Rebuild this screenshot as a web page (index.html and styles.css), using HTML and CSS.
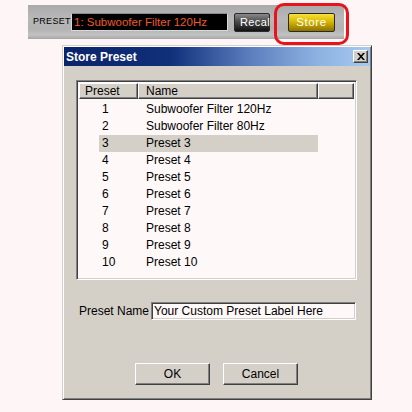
FILE: index.html
```html
<!DOCTYPE html>
<html lang="en">

<head>
    <meta charset="UTF-8">
    <meta name="viewport" content="width=device-width, initial-scale=1.0">
    <title>Store Preset</title>
    <link rel="stylesheet" href="styles.css">
</head>

<body>
    <!-- Preset toolbar -->
    <div class="toolbar">
        <span class="tb-label">PRESET</span>
        <div class="tb-display">1: Subwoofer Filter 120Hz</div>
        <button class="tb-btn tb-recall">Recal</button>
        <span class="callout"><button class="tb-btn tb-store">Store</button></span>
    </div>

    <!-- Store Preset dialog -->
    <div class="dialog">
        <div class="titlebar">
            <span class="title">Store Preset</span>
            <button class="close" aria-label="Close">
                <svg width="8" height="7" viewBox="0 0 8 7">
                    <path d="M0 0h2l2 2.2L6 0h2L5 3.5 8 7H6L4 4.8 2 7H0l3-3.5z" fill="#000"/>
                </svg>
            </button>
        </div>

        <div class="dialog-body">
            <div class="listbox">
                <div class="list-head">
                    <div class="head-cell col-preset">Preset</div>
                    <div class="head-cell col-name">Name</div>
                    <div class="head-cell col-rest"></div>
                </div>
                <ul class="rows">
                    <li class="row"><span class="num">1</span><span>Subwoofer Filter 120Hz</span></li>
                    <li class="row"><span class="num">2</span><span>Subwoofer Filter 80Hz</span></li>
                    <li class="row selected"><span class="num">3</span><span>Preset 3</span></li>
                    <li class="row"><span class="num">4</span><span>Preset 4</span></li>
                    <li class="row"><span class="num">5</span><span>Preset 5</span></li>
                    <li class="row"><span class="num">6</span><span>Preset 6</span></li>
                    <li class="row"><span class="num">7</span><span>Preset 7</span></li>
                    <li class="row"><span class="num">8</span><span>Preset 8</span></li>
                    <li class="row"><span class="num">9</span><span>Preset 9</span></li>
                    <li class="row"><span class="num">10</span><span>Preset 10</span></li>
                </ul>
            </div>

            <div class="name-row">
                <label for="presetName">Preset Name</label>
                <input type="text" id="presetName" value="Your Custom Preset Label Here">
            </div>

            <div class="actions">
                <button class="win-btn">OK</button>
                <button class="win-btn">Cancel</button>
            </div>
        </div>
    </div>
</body>

</html>
```

FILE: styles.css
```css
body {
    margin: 0;
    background-color: #fdf5f6;
    font-family: 'Liberation Sans', Arial, sans-serif;
    font-size: 11px;
    color: #000;
}

/* ---------- toolbar ---------- */
.toolbar {
    margin: 5px 0 0 28px;
    width: 316px;
    height: 34px;
    box-sizing: border-box;
    padding-left: 5px;
    display: flex;
    align-items: center;
    background: linear-gradient(#aaaaaa, #b8b8b8 40%, #b2b2b2 70%, #c2c2c2 88%, #a6a6a6);
}

.tb-label {
    width: 32px;
    margin-right: 6px;
    font-size: 9px;
    letter-spacing: 0.3px;
    color: #000;
    margin-top: -3px;
}

.tb-display {
    width: 157px;
    height: 18px;
    box-sizing: border-box;
    background-color: #000;
    border: 1px solid #d8d8d8;
    border-top-color: #8a8a8a;
    color: #f05a28;
    font-size: 11.5px;
    line-height: 16px;
    padding-left: 2px;
    white-space: nowrap;
    overflow: hidden;
}

.tb-btn {
    height: 19px;
    box-sizing: border-box;
    padding: 0;
    border: 1px solid #2a2a2a;
    border-radius: 2px;
    font-family: 'Liberation Sans', Arial, sans-serif;
    font-size: 11.5px;
    letter-spacing: 0.6px;
    color: #fff;
    cursor: pointer;
}

.tb-recall {
    width: 36px;
    margin-left: 6px;
    background: linear-gradient(#8a8a8a, #4a4a4a 45%, #111 100%);
    text-align: left;
    padding-left: 5px;
    font-size: 11px;
    letter-spacing: 0.4px;
    white-space: nowrap;
}

.tb-store {
    width: 47px;
    background: linear-gradient(#f7e23a, #d8b800 45%, #8c7200 100%);
}

.callout {
    position: relative;
    display: flex;
    margin-left: 18px;
}

.callout::after {
    content: '';
    position: absolute;
    top: -10px;
    bottom: -13px;
    left: -14px;
    right: -14px;
    border: 3px solid #e8141c;
    border-radius: 10px;
}

/* ---------- dialog ---------- */
.dialog {
    margin: 6px 0 0 62px;
    width: 310px;
    height: 355px;
    box-sizing: border-box;
    background-color: #d4d0c8;
    border: 1px solid;
    border-color: #d4d0c8 #404040 #404040 #d4d0c8;
    box-shadow: inset 1px 1px #fff, inset -1px -1px #808080;
    padding: 1px;
}

.titlebar {
    height: 19px;
    display: flex;
    align-items: center;
    justify-content: space-between;
    background: linear-gradient(to right, #0a246a 0%, #10307a 35%, #5a7cbc 60%, #8cb0e0 82%, #a6caf0 100%);
    padding: 0 2px 0 2px;
}

.title {
    color: #fff;
    font-weight: bold;
    font-size: 12px;
}

.close {
    width: 15px;
    height: 13px;
    padding: 0;
    display: flex;
    align-items: center;
    justify-content: center;
    background-color: #d4d0c8;
    border: 1px solid;
    border-color: #fff #404040 #404040 #fff;
    box-shadow: inset -1px -1px #808080;
}

.dialog-body {
    padding: 14px 0 0 12px;
}

/* ---------- list ---------- */
.listbox {
    width: 281px;
    height: 200px;
    box-sizing: border-box;
    background-color: #fff8f8;
    border: 1px solid;
    border-color: #808080 #fff #fff #808080;
    box-shadow: inset 1px 1px #404040, inset -1px -1px #d4d0c8;
    padding: 2px;
}

.list-head {
    display: flex;
    height: 16px;
}

.head-cell {
    box-sizing: border-box;
    height: 16px;
    line-height: 15px;
    font-size: 12px;
    background-color: #d4d0c8;
    border: 1px solid;
    border-color: #fff #404040 #404040 #fff;
    box-shadow: inset -1px -1px #808080;
}

.col-preset {
    width: 59px;
    padding-left: 5px;
}

.col-name {
    width: 180px;
    padding-left: 7px;
}

.col-rest {
    flex: 1;
}

.rows {
    list-style: none;
    margin: 2px 0 0 20px;
    padding: 0;
    width: 219px;
}

.row {
    display: flex;
    height: 17px;
    line-height: 17px;
    font-size: 12px;
}

.row.selected {
    background-color: #d4d0c8;
}

.num {
    width: 44px;
    padding-left: 3px;
}

/* ---------- name field ---------- */
.name-row {
    display: flex;
    align-items: center;
    margin-top: 22px;
    padding-left: 3px;
}

.name-row label {
    width: 72px;
    font-size: 12px;
}

.name-row input {
    width: 205px;
    height: 18px;
    box-sizing: border-box;
    margin: 0;
    padding: 0 2px;
    font-family: 'Liberation Sans', Arial, sans-serif;
    font-size: 12px;
    background-color: #fff8f8;
    border: 1px solid;
    border-color: #808080 #fff #fff #808080;
    box-shadow: inset 1px 1px #404040, inset -1px -1px #d4d0c8;
    outline: none;
}

/* ---------- buttons ---------- */
.actions {
    display: flex;
    justify-content: center;
    gap: 13px;
    margin-top: 43px;
    padding-right: 13px;
}

.win-btn {
    width: 75px;
    height: 22px;
    padding: 0;
    font-family: 'Liberation Sans', Arial, sans-serif;
    font-size: 12px;
    color: #000;
    background-color: #d4d0c8;
    border: 1px solid;
    border-color: #fff #404040 #404040 #fff;
    box-shadow: inset -1px -1px #808080;
    cursor: pointer;
}
```
